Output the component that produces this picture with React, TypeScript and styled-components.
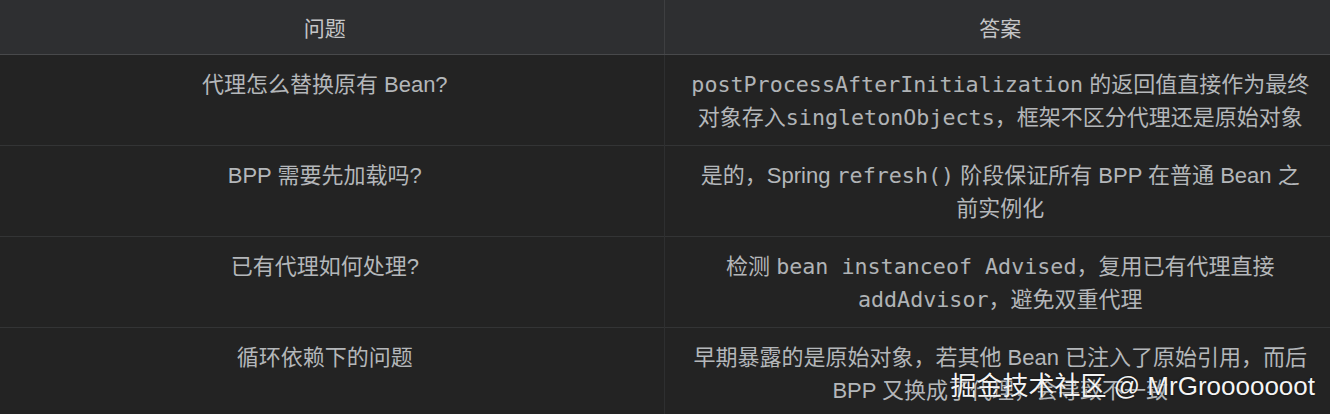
import React from "react";
import styled, { createGlobalStyle } from "styled-components";

const GlobalStyle = createGlobalStyle`
  html, body {
    margin: 0;
    padding: 0;
    background: #232323;
  }
`;

const Page = styled.div`
  position: relative;
  width: 1330px;
  height: 414px;
  overflow: hidden;
  background: #232323;
  font-family: "Liberation Sans", "Noto Sans CJK SC", sans-serif;
`;

const Table = styled.table`
  border-collapse: collapse;
  table-layout: fixed;
  width: 1350px;
  margin-left: -14px;
`;

const HeadCell = styled.th`
  height: 54px;
  padding: 0;
  background: #2e2f31;
  color: #c4c5c7;
  font-size: 21px;
  font-weight: 400;
  text-align: center;
  border-bottom: 1px solid #48494b;
  & + & {
    border-left: 1px solid #3e3f41;
  }
`;

const Row = styled.tr`
  border-bottom: 1px solid #333435;
`;

const Cell = styled.td`
  padding: 13px 0 11px;
  color: #b4b7ba;
  font-size: 22px;
  line-height: 33px;
  text-align: center;
  vertical-align: top;
  white-space: nowrap;
  & + & {
    border-left: 1px solid #2e2f30;
  }
`;

const Code = styled.span`
  font-family: "DejaVu Sans Mono", "Noto Sans CJK SC", monospace;
  font-size: 21.7px;
  color: #b0b3b6;
`;

const Watermark = styled.div`
  position: absolute;
  right: 15px;
  bottom: 13px;
  color: #f4f4f4;
  font-size: 26px;
  line-height: 30px;
  font-family: "Liberation Sans", "Noto Sans CJK SC", sans-serif;
  text-shadow: 0 0 2px rgba(0, 0, 0, 0.6);
`;

type Item = { q: React.ReactNode; a: React.ReactNode };

const rows: Item[] = [
  {
    q: "代理怎么替换原有 Bean?",
    a: (
      <>
        <Code>postProcessAfterInitialization</Code> 的返回值直接作为最终
        <br />
        对象存入<Code>singletonObjects</Code>，框架不区分代理还是原始对象
      </>
    ),
  },
  {
    q: "BPP 需要先加载吗?",
    a: (
      <>
        是的，Spring <Code>refresh()</Code> 阶段保证所有 BPP 在普通 Bean 之
        <br />
        前实例化
      </>
    ),
  },
  {
    q: "已有代理如何处理?",
    a: (
      <>
        检测 <Code>bean instanceof Advised</Code>，复用已有代理直接
        <br />
        <Code>addAdvisor</Code>，避免双重代理
      </>
    ),
  },
  {
    q: "循环依赖下的问题",
    a: (
      <>
        早期暴露的是原始对象，若其他 Bean 已注入了原始引用，而后
        <br />
        BPP 又换成了代理，会导致不一致
      </>
    ),
  },
];

export default function App() {
  return (
    <>
      <GlobalStyle />
      <Page>
        <Table>
          <colgroup>
            <col style={{ width: 678 }} />
            <col style={{ width: 672 }} />
          </colgroup>
          <thead>
            <tr>
              <HeadCell>问题</HeadCell>
              <HeadCell>答案</HeadCell>
            </tr>
          </thead>
          <tbody>
            {rows.map((r, i) => (
              <Row key={i}>
                <Cell>{r.q}</Cell>
                <Cell>{r.a}</Cell>
              </Row>
            ))}
          </tbody>
        </Table>
        <Watermark>掘金技术社区 @ MrGrooooooot</Watermark>
      </Page>
    </>
  );
}
